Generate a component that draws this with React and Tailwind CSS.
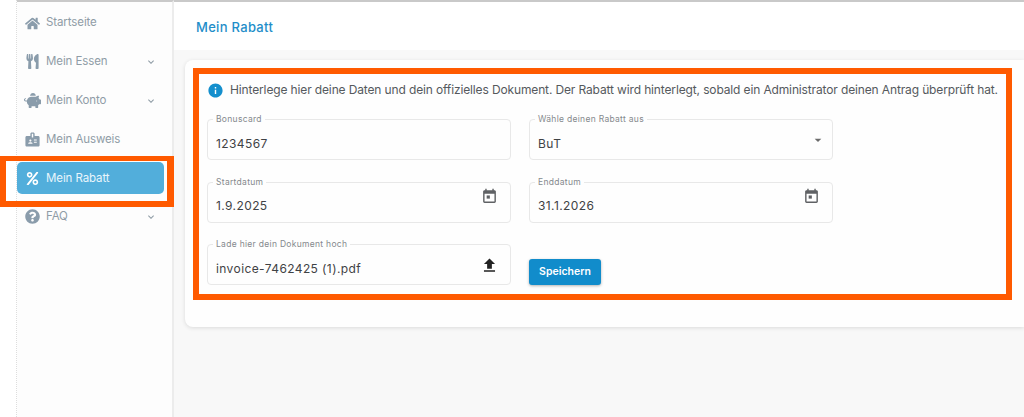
import { FaHome, FaUtensils, FaPiggyBank, FaPercent, FaQuestionCircle } from "react-icons/fa"
import { MdBadge, MdExpandMore, MdInfo, MdFileUpload, MdArrowDropDown } from "react-icons/md"

const menu = [
  { label: "Startseite", icon: <FaHome size={15} /> },
  { label: "Mein Essen", icon: <FaUtensils size={15} />, more: true },
  { label: "Mein Konto", icon: <FaPiggyBank size={17} />, more: true },
  { label: "Mein Ausweis", icon: <MdBadge size={17} /> },
  { label: "Mein Rabatt", icon: <FaPercent size={13} />, active: true },
  { label: "FAQ", icon: <FaQuestionCircle size={15} />, more: true },
]

function CalendarIcon() {
  return (
    <svg viewBox="0 0 24 24" width="17" height="17" fill="currentColor" className="text-[#5f6164] -mt-[11px]">
      <path d="M19 3h-1V1h-2v2H8V1H6v2H5c-1.11 0-2 .9-2 2v14c0 1.1.89 2 2 2h14c1.1 0 2-.9 2-2V5c0-1.1-.9-2-2-2zm0 16H5V8h14v11z" />
      <path d="M8 10.5h4.5V15H8z" />
    </svg>
  )
}

function MenuItem({ item }) {
  return (
    <div
      className={`h-[32px] mb-[6.8px] mr-[8px] flex items-center pl-[5px] pr-[7px] rounded-[5px] text-[11.5px] tracking-[-0.1px] ${
        item.active ? "bg-[#52aedb] text-[#e8f5fb]" : "text-[#8f9ca6]"
      }`}
    >
      <span className={`w-[20px] flex justify-center ${item.active ? "text-white" : "text-[#8a9cab]"}`}>{item.icon}</span>
      <span className="ml-[4px] flex-1">{item.label}</span>
      {item.more && <MdExpandMore size={12} className="text-[#8f9ca6]" />}
    </div>
  )
}

function Field({ label, value, icon, className }) {
  return (
    <div className={`relative h-[41px] border border-[#e8e8e8] rounded-[4px] flex items-center pl-[8px] pr-[12px] ${className}`}>
      <span className="absolute -top-[6px] left-[5px] px-[3px] bg-[#fefefe] text-[8.5px] leading-[10px] tracking-[0.3px] text-[#85898d]">{label}</span>
      <span className="flex-1 pt-[8px] text-[12px] tracking-[0.4px] text-[#3f4245]">{value}</span>
      {icon}
    </div>
  )
}

export default function App() {
  return (
    <div className="relative flex h-screen overflow-hidden bg-white font-['Inter',sans-serif]">
      <div className="w-[17px] shrink-0 border-r border-dotted border-[#dddddd]" />

      <aside className="w-[157px] shrink-0 bg-[#fdfdfd] border-t-2 border-r-2 border-[#ececec] border-t-[#c9c9c9] pt-[5px]">
        {menu.map((item) => (
          <MenuItem key={item.label} item={item} />
        ))}
      </aside>

      <main className="flex-1 min-w-0 bg-[#f8f8f8] border-t-2 border-[#c9c9c9]">
        <header className="h-[48px] bg-white flex items-center pl-[22px] pt-[3px]">
          <h1 className="text-[13px] font-medium tracking-[0.3px] text-[#1f8ec9]">Mein Rabatt</h1>
        </header>

        <section className="mt-[10px] ml-[11px] h-[267px] bg-[#fefefe] rounded-l-[8px] shadow-[0_1px_4px_rgba(0,0,0,0.12)] pl-[8px] pt-[8px] pr-[12px]">
          <div className="h-[232px] border-[6px] border-[#ff5a00] pl-[8px] pt-[7px]">
            <div className="flex items-center h-[18px]">
              <MdInfo size={17} className="text-[#148fcd]" />
              <p className="ml-[6px] text-[12px] tracking-[-0.135px] whitespace-nowrap text-[#55595d]">
                Hinterlege hier deine Daten und dein offizielles Dokument. Der Rabatt wird hinterlegt, sobald ein Administrator deinen Antrag überprüft hat.
              </p>
            </div>

            <div className="mt-[20px] grid grid-cols-[304px_304px] gap-x-[18px] gap-y-[21.5px]">
              <Field label="Bonuscard" value="1234567" />
              <Field label="Wähle deinen Rabatt aus" value="BuT" icon={<MdArrowDropDown size={16} className="text-[#6b6b6b] mt-[1px] -mr-[6px]" />} />
              <Field label="Startdatum" value="1.9.2025" icon={<CalendarIcon />} />
              <Field label="Enddatum" value="31.1.2026" icon={<CalendarIcon />} />
              <Field label="Lade hier dein Dokument hoch" value="invoice-7462425 (1).pdf" icon={<MdFileUpload size={19} className="text-[#222222] mt-[2px] -mr-[1px]" />} />
              <div className="flex items-end">
                <button className="w-[72px] h-[26px] bg-[#118ccb] text-white text-[10.5px] font-semibold rounded-[3px] shadow-[0_1px_3px_rgba(0,0,0,0.3)]">
                  Speichern
                </button>
              </div>
            </div>
          </div>
        </section>
      </main>

      {/* orange marker over the active sidebar entry */}
      <div className="absolute left-0 top-[156px] w-[174px] h-[51px] border-[6px] border-t-[5px] border-r-[7px] border-[#ff5a00]" />
    </div>
  )
}
